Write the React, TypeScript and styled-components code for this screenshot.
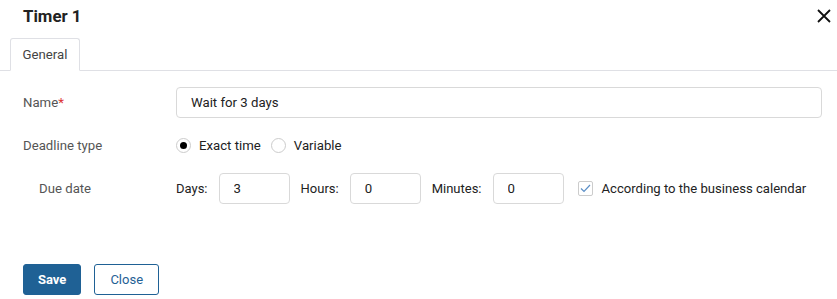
import React, { useState } from "react";
import styled, { createGlobalStyle } from "styled-components";

const GlobalStyle = createGlobalStyle`
  body {
    margin: 0;
    background: #fff;
    font-family: Roboto, "Liberation Sans", Arial, sans-serif;
    color: #333;
  }
  * { box-sizing: border-box; }
`;

const Dialog = styled.div`
  width: 837px;
  height: 299px;
  display: flex;
  flex-direction: column;
  overflow: hidden;
`;

const Header = styled.div`
  height: 38px;
  display: flex;
  align-items: flex-start;
  justify-content: space-between;
  padding: 6px 4px 0 23px;
`;

const Title = styled.h1`
  margin: 0;
  font-size: 16.8px;
  font-weight: 700;
  line-height: 20px;
  color: #222;
`;

const CloseIcon = styled.button`
  border: 0;
  background: none;
  padding: 0;
  width: 18px;
  height: 18px;
  margin-top: 1px;
  cursor: pointer;
  display: flex;
  align-items: center;
  justify-content: center;
`;

const TabBar = styled.div`
  display: flex;
  padding-left: 10px;
  border-bottom: 1px solid #dfe0e5;
  height: 33px;
`;

const Tab = styled.div<{ active?: boolean }>`
  height: 33px;
  width: 70px;
  display: flex;
  align-items: center;
  justify-content: center;
  font-size: 13.2px;
  color: #444;
  background: #fff;
  border: 1px solid #dfe0e5;
  border-bottom-color: ${(p) => (p.active ? "#fff" : "#dfe0e5")};
  border-radius: 3px 3px 0 0;
`;

const Form = styled.div`
  padding: 16px 15px 0 23px;
  display: flex;
  flex-direction: column;
`;

const Row = styled.div<{ h: number }>`
  display: grid;
  grid-template-columns: 153px 1fr;
  align-items: center;
  height: ${(p) => p.h}px;
`;

const Label = styled.label<{ indent?: boolean }>`
  font-size: 13.2px;
  color: #555;
  padding-left: ${(p) => (p.indent ? 16 : 0)}px;
`;

const Req = styled.span`
  color: #d33;
`;

const TextInput = styled.input<{ w?: number }>`
  height: 31px;
  width: ${(p) => (p.w ? `${p.w}px` : "100%")};
  border: 1px solid #d9d9d9;
  border-radius: 4px;
  padding: 0 14px;
  font-family: inherit;
  font-size: 13.2px;
  color: #222;
  outline: none;
`;

const Inline = styled.div`
  display: flex;
  align-items: center;
`;

const RadioItem = styled.label`
  display: flex;
  align-items: center;
  gap: 8px;
  font-size: 13.2px;
  color: #222;
  margin-right: 10px;
  cursor: pointer;
`;

const RadioDot = styled.span<{ checked: boolean }>`
  width: 15px;
  height: 15px;
  border-radius: 50%;
  border: 1px solid #ccc;
  display: flex;
  align-items: center;
  justify-content: center;
  &::after {
    content: "";
    width: 7px;
    height: 7px;
    border-radius: 50%;
    background: ${(p) => (p.checked ? "#000" : "transparent")};
  }
`;

const UnitLabel = styled.span<{ gap?: number }>`
  font-size: 13px;
  color: #222;
  margin-left: ${(p) => p.gap ?? 0}px;
  margin-right: 11px;
`;

const CheckItem = styled.label`
  display: flex;
  align-items: center;
  gap: 9px;
  margin-left: 14px;
  font-size: 13.1px;
  color: #222;
  white-space: nowrap;
`;

const CheckBox = styled.span`
  width: 15px;
  height: 15px;
  border: 1px solid #ccc;
  border-radius: 2px;
  display: flex;
  align-items: center;
  justify-content: center;
`;

const Footer = styled.div`
  margin-top: auto;
  padding: 0 0 4px 23px;
  display: flex;
  gap: 13px;
`;

const Button = styled.button<{ primary?: boolean }>`
  height: 31px;
  padding: 0 ${(p) => (p.primary ? 14 : 15)}px;
  border-radius: 3px;
  font-family: inherit;
  font-size: 13px;
  font-weight: ${(p) => (p.primary ? 700 : 400)};
  border: 1px solid #1f6195;
  background: ${(p) => (p.primary ? "#1f6195" : "#fff")};
  color: ${(p) => (p.primary ? "#fff" : "#1f6195")};
  cursor: pointer;
`;

export default function App() {
  const [type, setType] = useState("exact");
  return (
    <Dialog>
      <GlobalStyle />
      <Header>
        <Title>Timer 1</Title>
        <CloseIcon aria-label="Close">
          <svg width="16" height="16" viewBox="0 0 16 16">
            <path d="M2 2 L14 14 M14 2 L2 14" stroke="#111" strokeWidth="1.8" />
          </svg>
        </CloseIcon>
      </Header>
      <TabBar>
        <Tab active>General</Tab>
      </TabBar>
      <Form>
        <Row h={31}>
          <Label>
            Name<Req>*</Req>
          </Label>
          <TextInput defaultValue="Wait for 3 days" />
        </Row>
        <Row h={55}>
          <Label>Deadline type</Label>
          <Inline>
            <RadioItem onClick={() => setType("exact")}>
              <RadioDot checked={type === "exact"} />
              Exact time
            </RadioItem>
            <RadioItem onClick={() => setType("variable")}>
              <RadioDot checked={type === "variable"} />
              Variable
            </RadioItem>
          </Inline>
        </Row>
        <Row h={31}>
          <Label indent>Due date</Label>
          <Inline>
            <UnitLabel>Days:</UnitLabel>
            <TextInput w={71} defaultValue="3" />
            <UnitLabel gap={11}>Hours:</UnitLabel>
            <TextInput w={71} defaultValue="0" />
            <UnitLabel gap={11}>Minutes:</UnitLabel>
            <TextInput w={71} defaultValue="0" />
            <CheckItem>
              <CheckBox>
                <svg width="11" height="9" viewBox="0 0 11 9">
                  <path d="M1 4.5 L4 7.5 L10 1" fill="none" stroke="#5b8fc7" strokeWidth="1.2" />
                </svg>
              </CheckBox>
              According to the business calendar
            </CheckItem>
          </Inline>
        </Row>
      </Form>
      <Footer>
        <Button primary>Save</Button>
        <Button>Close</Button>
      </Footer>
    </Dialog>
  );
}
